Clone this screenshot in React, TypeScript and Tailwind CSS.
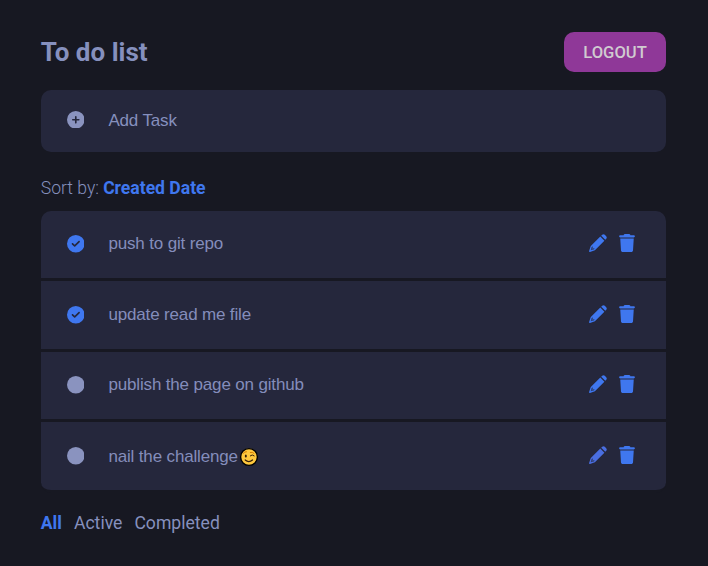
import { FaCirclePlus, FaCircleCheck, FaCircle, FaTrash } from 'react-icons/fa6';

type Task = { id: number; text: string; done: boolean; wink?: boolean; size: string; edit: string };

const tasks: Task[] = [
  { id: 1, text: 'push to git repo', done: true, size: 'h-[70px] rounded-t-[10px] pb-px', edit: 'text-[#3f77ef]' },
  { id: 2, text: 'update read me file', done: true, size: 'h-[71px]', edit: 'text-[#3f77ef]' },
  { id: 3, text: 'publish the page on github', done: false, size: 'h-[70px] pb-px', edit: 'text-[#3f77ef]' },
  { id: 4, text: 'nail the challenge', done: false, wink: true, size: 'h-[71px] rounded-b-[10px]', edit: 'text-[#4a6ee0]' },
];

function Wink() {
  return (
    <svg viewBox="0 0 20 20" className="ml-px h-5 w-5 shrink-0" aria-label="wink">
      <circle cx="10" cy="10" r="8.4" fill="#ffc83d" stroke="#000" strokeWidth="1.4" />
      <ellipse cx="6.8" cy="8.9" rx="1" ry="1.5" fill="#35210b" />
      <path d="M4.4 6.2Q5.5 4.5 7.5 4.7" fill="none" stroke="#d67d00" strokeWidth="1" strokeLinecap="round" />
      <path d="M11.3 5.4Q13.4 4.7 15 6.3" fill="none" stroke="#d67d00" strokeWidth="1" strokeLinecap="round" />
      <path d="M11.3 8.8Q13.3 6.9 15.2 8.8" fill="none" stroke="#35210b" strokeWidth="1" strokeLinecap="round" />
      <path d="M6.2 13Q9.8 16.3 13.5 13" fill="none" stroke="#35210b" strokeWidth="1.2" strokeLinecap="round" />
    </svg>
  );
}

function Pencil({ className }: { className: string }) {
  return (
    <svg viewBox="0 0 18 18" fill="currentColor" className={className}>
      <path d="M12.2 1.7L13.2 .8Q14.5 -.3 15.8 .8L17.2 2.2Q18.3 3.5 17.2 4.8L16.3 5.8Z" />
      <path
        fillRule="evenodd"
        d="M11.3 2.6L15.4 6.7L6.4 15.8Q5.9 16.2 5.2 16.5L1 17.9Q-.1 18.1 .1 17L1.5 12.8Q1.8 12.1 2.3 11.6ZM2.7 12.9L1.7 16.3L5.1 15.3L5.4 14.2L3.8 14.2L3.8 12.6Z"
      />
      <path d="M2.9 12.7L5.3 15.1L2.1 16.1Z" opacity=".45" />
    </svg>
  );
}

function TaskRow({ task }: { task: Task }) {
  const Mark = task.done ? FaCircleCheck : FaCircle;
  return (
    <li className={`flex items-center border-b-[3px] border-[#171822] bg-[#25273c] pr-[31px] pl-[26px] ${task.size}`}>
      <Mark className={`mr-6 size-[17.6px] shrink-0 ${task.done ? 'text-[#3f77ef]' : 'text-[#8a93bf]'}`} />
      <span className={`flex flex-1 items-center font-['Liberation_Sans',Arial,sans-serif] text-[17px] leading-5 tracking-[-0.155px] text-[#848dbb] ${task.wink ? 'pt-px' : ''}`}>
        {task.text}
        {task.wink && <Wink />}
      </span>
      <Pencil className={`mr-3 mb-[2px] size-[18px] ${task.edit}`} />
      <FaTrash className="mb-[2px] h-[18px] w-4 text-[#3f77ef]" />
    </li>
  );
}

export default function App() {
  return (
    <div className="h-[566px] w-[708px] bg-[#171822] pt-8 pr-[42px] pl-[40.8px] font-[Roboto,sans-serif] text-[#8690be]">
      <header className="flex h-10 items-center justify-between">
        <h1 className="text-[26px] leading-8 font-bold">To do list</h1>
        <button className="h-10 w-[102px] rounded-[10px] bg-[#8f3898] pt-[2px] text-[16.6px] font-medium text-[#d0cbd0]">LOGOUT</button>
      </header>
      <div className="mt-[18px] flex h-[62px] items-center rounded-[10px] bg-[#25273c] pb-[3px] pl-[26px]">
        <FaCirclePlus className="mr-6 size-[17.6px] text-[#8a93bf]" />
        <span className="pt-[2px] font-['Liberation_Sans',Arial,sans-serif] text-[17px] leading-5 tracking-[-0.155px]">Add Task</span>
      </div>
      <p className="mt-6 h-[35px] text-[17.6px] leading-6 font-light tracking-[-0.03px]">
        Sort by: <strong className="font-bold text-[#3f77ef]">Created Date</strong>
      </p>
      <ul>
        {tasks.map((task) => (
          <TaskRow key={task.id} task={task} />
        ))}
      </ul>
      <nav className="mt-[18px] flex gap-3 text-[17.6px] leading-6">
        <a className="font-bold text-[#3f77ef]">All</a>
        <a>Active</a>
        <a>Completed</a>
      </nav>
    </div>
  );
}
